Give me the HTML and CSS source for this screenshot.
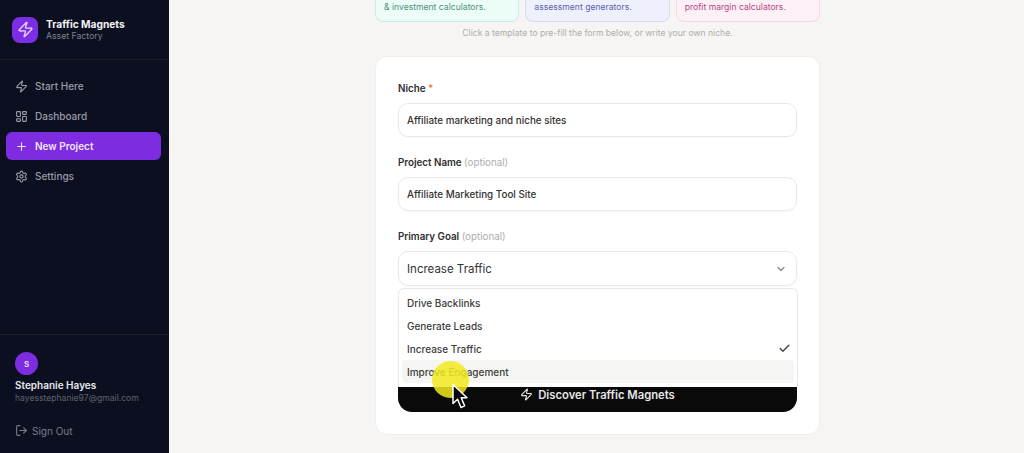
FILE: index.html
```html
<!DOCTYPE html>
<html>
    <head>
        <meta charset="UTF-8">
        <title>Traffic Magnets</title>
        <link rel="stylesheet" href="styles.css">
    </head>
    <body>
        <aside class="sidebar">
            <div class="brand">
                <div class="brandLogo">
                    <svg width="17" height="17" viewBox="0 0 24 24" fill="none" stroke="#eccfff" stroke-width="2" stroke-linejoin="round" stroke-linecap="round"><path d="M4 14a1 1 0 0 1-.78-1.630l9.900-10.200a.5.5 0 0 1 .86.46l-1.920 6.020A1 1 0 0 0 13 10h7a1 1 0 0 1 .78 1.630l-9.900 10.200a.5.5 0 0 1-.86-.46l1.920-6.020A1 1 0 0 0 11 14z"/></svg>
                </div>
                <div>
                    <div class="brandName">Traffic Magnets</div>
                    <div class="brandSub">Asset Factory</div>
                </div>
            </div>
            <nav class="nav">
                <a class="navItem">
                    <svg width="13" height="13" viewBox="0 0 24 24" fill="none" stroke="currentColor" stroke-width="2" stroke-linejoin="round" stroke-linecap="round"><path d="M4 14a1 1 0 0 1-.78-1.630l9.900-10.200a.5.5 0 0 1 .86.46l-1.920 6.020A1 1 0 0 0 13 10h7a1 1 0 0 1 .78 1.630l-9.900 10.200a.5.5 0 0 1-.86-.46l1.920-6.020A1 1 0 0 0 11 14z"/></svg>
                    Start Here
                </a>
                <a class="navItem">
                    <svg width="13" height="13" viewBox="0 0 24 24" fill="none" stroke="currentColor" stroke-width="2"><rect x="3" y="3" width="7" height="9" rx="1"/><rect x="14" y="3" width="7" height="5" rx="1"/><rect x="14" y="12" width="7" height="9" rx="1"/><rect x="3" y="16" width="7" height="5" rx="1"/></svg>
                    Dashboard
                </a>
                <a class="navItem active">
                    <svg width="13" height="13" viewBox="0 0 24 24" fill="none" stroke="currentColor" stroke-width="2" stroke-linecap="round"><path d="M5 12h14M12 5v14"/></svg>
                    New Project
                </a>
                <a class="navItem">
                    <svg width="13" height="13" viewBox="0 0 24 24" fill="none" stroke="currentColor" stroke-width="2" stroke-linejoin="round" stroke-linecap="round"><path d="M12.220 2h-.44a2 2 0 0 0-2 2v.18a2 2 0 0 1-1 1.730l-.43.25a2 2 0 0 1-2 0l-.15-.08a2 2 0 0 0-2.730.73l-.22.38a2 2 0 0 0 .73 2.730l.15.1a2 2 0 0 1 1 1.720v.51a2 2 0 0 1-1 1.740l-.15.09a2 2 0 0 0-.73 2.730l.22.38a2 2 0 0 0 2.730.73l.15-.08a2 2 0 0 1 2 0l.43.25a2 2 0 0 1 1 1.730V20a2 2 0 0 0 2 2h.44a2 2 0 0 0 2-2v-.18a2 2 0 0 1 1-1.730l.43-.25a2 2 0 0 1 2 0l.15.08a2 2 0 0 0 2.730-.73l.22-.39a2 2 0 0 0-.73-2.730l-.15-.08a2 2 0 0 1-1-1.740v-.5a2 2 0 0 1 1-1.740l.15-.09a2 2 0 0 0 .73-2.730l-.22-.38a2 2 0 0 0-2.730-.73l-.15.08a2 2 0 0 1-2 0l-.43-.25a2 2 0 0 1-1-1.730V4a2 2 0 0 0-2-2z"/><circle cx="12" cy="12" r="3"/></svg>
                    Settings
                </a>
            </nav>
            <div class="account">
                <div class="avatar">S</div>
                <div class="userName">Stephanie Hayes</div>
                <div class="userMail">hayesstephanie97@gmail.com</div>
                <a class="signOut">
                    <svg width="13" height="13" viewBox="0 0 24 24" fill="none" stroke="currentColor" stroke-width="2" stroke-linecap="round" stroke-linejoin="round"><path d="M9 3H5a2 2 0 0 0-2 2v14a2 2 0 0 0 2 2h4M16 17l5-5-5-5M21 12H9"/></svg>
                    Sign Out
                </a>
            </div>
        </aside>
        <main class="main">
            <div class="templates">
                <div class="template green">&amp; investment calculators.</div>
                <div class="template blue">assessment generators.</div>
                <div class="template pink">profit margin calculators.</div>
            </div>
            <p class="hint">Click a template to pre-fill the form below, or write your own niche.</p>
            <form class="card">
                <div class="field">
                    <label class="label">Niche <span class="required">*</span></label>
                    <div class="input">Affiliate marketing and niche sites</div>
                </div>
                <div class="field">
                    <label class="label">Project Name <span class="optional">(optional)</span></label>
                    <div class="input">Affiliate Marketing Tool Site</div>
                </div>
                <div class="field">
                    <label class="label">Primary Goal <span class="optional">(optional)</span></label>
                    <div class="selectWrap">
                        <div class="input select">
                            Increase Traffic
                            <svg width="12" height="12" viewBox="0 0 24 24" fill="none" stroke="#8a8a8a" stroke-width="2.500" stroke-linecap="round" stroke-linejoin="round"><path d="m6 9 6 6 6-6"/></svg>
                        </div>
                        <div class="dropdown">
                            <div class="option">Drive Backlinks</div>
                            <div class="option">Generate Leads</div>
                            <div class="option">
                                Increase Traffic
                                <svg width="13" height="13" viewBox="0 0 24 24" fill="none" stroke="#444444" stroke-width="2.500" stroke-linecap="round" stroke-linejoin="round"><path d="M20 6 9 17l-5-5"/></svg>
                            </div>
                            <div class="option hover">Improve Engagement</div>
                        </div>
                    </div>
                </div>
                <button class="submit" type="button">
                    <svg width="13" height="13" viewBox="0 0 24 24" fill="none" stroke="currentColor" stroke-width="2" stroke-linejoin="round" stroke-linecap="round"><path d="M4 14a1 1 0 0 1-.78-1.630l9.900-10.200a.5.5 0 0 1 .86.46l-1.920 6.020A1 1 0 0 0 13 10h7a1 1 0 0 1 .78 1.630l-9.900 10.200a.5.5 0 0 1-.86-.46l1.920-6.020A1 1 0 0 0 11 14z"/></svg>
                    Discover Traffic Magnets
                </button>
            </form>
        </main>
        <div class="cursorHalo"></div>
        <svg class="cursorArrow" width="20" height="28" viewBox="0 0 20 28"><path d="M2 1.500v19l4.600-4.300 3.400 8.300 3.600-1.600-3.400-8.100H16z" fill="#050505" stroke="#ffffff" stroke-width="1.500" stroke-linejoin="round"/></svg>
    </body>
</html>
```

FILE: styles.css
```css
html, body {
    margin: 0;
    width: 100%;
    height: 100%;
    overflow: hidden;
}

body {
    display: flex;
    background: #f6f5f3;
    font-family: Inter, "Liberation Sans", sans-serif;
    color: #2a2a2a;
}

.sidebar {
    width: 169px;
    flex: none;
    display: flex;
    flex-direction: column;
    background: #0c0f1f;
    color: #9a9ca8;
}

.brand {
    display: flex;
    align-items: center;
    gap: 8px;
    height: 60px;
    padding: 0 12px;
    box-sizing: border-box;
    border-bottom: 1px solid #1a1d2c;
}

.brandLogo {
    width: 26px;
    height: 26px;
    border-radius: 8px;
    background: #7c2ee6;
    display: flex;
    align-items: center;
    justify-content: center;
}

.brandName {
    font-size: 10.200px;
    font-weight: 700;
    color: #f2f2f5;
    line-height: 14px;
}

.brandSub {
    font-size: 8.700px;
    color: #80828f;
    line-height: 11px;
}

.nav {
    display: flex;
    flex-direction: column;
    gap: 2px;
    padding: 12px 8px 0 6px;
}

.navItem {
    display: flex;
    align-items: center;
    gap: 7px;
    height: 28px;
    padding: 0 9px;
    border-radius: 6px;
    font-size: 10px;
    font-weight: 500;
}

.navItem.active {
    background: #7e2ce0;
    color: #f0e4ff;
    font-weight: 600;
}

.account {
    margin-top: auto;
    height: 119px;
    box-sizing: border-box;
    padding: 17px 15px 0;
    border-top: 1px solid #1a1d2c;
}

.avatar {
    width: 23px;
    height: 23px;
    border-radius: 50%;
    background: #7e2ce0;
    color: #eedcff;
    font-size: 8px;
    font-weight: 600;
    display: flex;
    align-items: center;
    justify-content: center;
}

.userName {
    margin-top: 4px;
    font-size: 10px;
    font-weight: 600;
    color: #e8e8ec;
    line-height: 13px;
}

.userMail {
    font-size: 8.600px;
    color: #5f6170;
    line-height: 12px;
}

.signOut {
    display: flex;
    align-items: center;
    gap: 4px;
    margin-top: 20px;
    font-size: 10px;
    color: #7b7d89;
}

.main {
    flex: 1;
    display: flex;
    flex-direction: column;
    align-items: center;
    padding-left: 2px;
}

.templates {
    display: flex;
    gap: 6px;
    width: 445px;
}

.template {
    flex: 1;
    height: 22px;
    box-sizing: border-box;
    padding-left: 8px;
    font-size: 8.600px;
    line-height: 14px;
    border: 1px solid;
    border-top: 0;
    border-radius: 0 0 8px 8px;
}

.green {
    background: #ecfcf7;
    border-color: #c6f0e2;
    color: #4f8f84;
}

.blue {
    background: #eef1fd;
    border-color: #d6dcf6;
    color: #5f5db0;
}

.pink {
    background: #fdf0f7;
    border-color: #f8d8e8;
    color: #b5487f;
}

.hint {
    margin: 0;
    padding-top: 5px;
    font-size: 8.600px;
    line-height: 12px;
    color: #adadad;
}

.card {
    width: 445px;
    height: 379px;
    margin-top: 17px;
    flex: none;
    box-sizing: border-box;
    padding: 24px 22px 0;
    display: flex;
    flex-direction: column;
    gap: 18px;
    background: #ffffff;
    border: 1px solid #eeeeec;
    border-radius: 12px;
}

.field {
    display: flex;
    flex-direction: column;
    gap: 6px;
}

.label {
    font-size: 9.800px;
    font-weight: 600;
    line-height: 16px;
    color: #2e2e2e;
}

.required {
    color: #e8793a;
}

.optional {
    font-weight: 400;
    color: #adadad;
}

.input {
    height: 34px;
    box-sizing: border-box;
    padding: 0 8px;
    display: flex;
    align-items: center;
    font-size: 9.850px;
    font-weight: 500;
    color: #333333;
    border: 1px solid #e8e8e8;
    border-radius: 10px;
    box-shadow: 0 1px 2px rgba(0, 0, 0, 0.03);
}

.selectWrap {
    position: relative;
}

.select {
    height: 35px;
    justify-content: space-between;
    font-size: 11.500px;
    font-weight: 400;
    padding-right: 9px;
}

.dropdown {
    position: absolute;
    top: 37px;
    left: 0;
    right: -1px;
    height: 99px;
    box-sizing: border-box;
    padding: 2px 3px;
    background: #ffffff;
    border: 1px solid #e8e8e8;
    border-bottom: 0;
    border-radius: 6px 6px 0 0;
    z-index: 2;
}

.option {
    height: 23px;
    padding: 0 3px 0 5px;
    display: flex;
    align-items: center;
    justify-content: space-between;
    font-size: 10px;
    font-weight: 500;
    color: #3c3c3c;
}

.option.hover {
    background: #f5f5f4;
    border-radius: 4px;
}

.submit {
    margin-top: 73px;
    height: 35px;
    display: flex;
    align-items: center;
    justify-content: center;
    gap: 5px;
    font-family: inherit;
    font-size: 11.250px;
    font-weight: 600;
    color: #e6e6e6;
    background: #0a0a0a;
    border: 0;
    border-radius: 0 0 14px 14px;
}

.cursorHalo {
    position: absolute;
    left: 432px;
    top: 361px;
    width: 37px;
    height: 37px;
    border-radius: 50%;
    background: rgba(242, 234, 30, 0.85);
    z-index: 3;
}

.cursorArrow {
    position: absolute;
    left: 451px;
    top: 383px;
    z-index: 4;
}
```
